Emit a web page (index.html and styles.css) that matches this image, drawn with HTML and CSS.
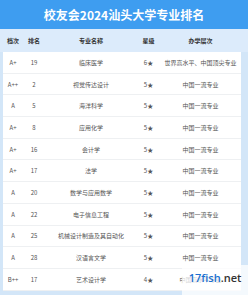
FILE: index.html
```html
<!DOCTYPE html>
<html>

<head>
    <title>校友会2024汕头大学专业排名</title>
    <link rel="stylesheet" href="styles.css">
</head>

<body>
    <div class="page">
        <h1 class="title">校友会2024汕头大学专业排名</h1>
        <div class="row head">
            <div>档次</div>
            <div>排名</div>
            <div>专业名称</div>
            <div>星级</div>
            <div>办学层次</div>
        </div>
        <div class="body">
            <div class="row"><div>A+</div><div>19</div><div>临床医学</div><div>6★</div><div>世界高水平、中国顶尖专业</div></div>
            <div class="row"><div>A++</div><div>2</div><div>视觉传达设计</div><div>5★</div><div>中国一流专业</div></div>
            <div class="row"><div>A</div><div>5</div><div>海洋科学</div><div>5★</div><div>中国一流专业</div></div>
            <div class="row"><div>A+</div><div>8</div><div>应用化学</div><div>5★</div><div>中国一流专业</div></div>
            <div class="row"><div>A+</div><div>16</div><div>会计学</div><div>5★</div><div>中国一流专业</div></div>
            <div class="row"><div>A+</div><div>17</div><div>法学</div><div>5★</div><div>中国一流专业</div></div>
            <div class="row"><div>A</div><div>20</div><div>数学与应用数学</div><div>5★</div><div>中国一流专业</div></div>
            <div class="row"><div>A</div><div>22</div><div>电子信息工程</div><div>5★</div><div>中国一流专业</div></div>
            <div class="row"><div>A</div><div>25</div><div>机械设计制造及其自动化</div><div>5★</div><div>中国一流专业</div></div>
            <div class="row"><div>A</div><div>28</div><div>汉语言文学</div><div>5★</div><div>中国一流专业</div></div>
            <div class="row"><div>B++</div><div>17</div><div>艺术设计学</div><div>4★</div><div>中国高水平专业</div></div>
        </div>
        <div class="mark"><span class="fish">17fish</span>.net</div>
    </div>
</body>

</html>
```

FILE: styles.css
```css
body {
    margin: 0;
    font-family: "Noto Sans CJK SC", "Noto Sans", sans-serif;
}

.page {
    position: relative;
    width: 248px;
    height: 295px;
    overflow: hidden;
    background-color: #d3e6f8;
}

.title {
    margin: 0;
    height: 29px;
    line-height: 29px;
    background-color: #3e9df0;
    color: #fff;
    font-size: 12px;
    font-weight: bold;
    text-align: center;
}

.row {
    display: grid;
    grid-template-columns: 20px 22px 92px 23px 81px;
    align-items: center;
    text-align: center;
    font-size: 6px;
    color: #555;
}

.head {
    height: 23px;
    padding-left: 3px;
    background-color: #dcebfb;
    color: #333;
    font-weight: bold;
}

.body {
    margin: 0 7px 0 3px;
    background-color: #fff;
}

.body .row {
    height: 21.7px;
    box-sizing: border-box;
    border-bottom: 1px solid #eef0f2;
}

.mark {
    position: absolute;
    right: 0;
    bottom: 0;
    width: 66px;
    height: 30px;
    padding-top: 5px;
    box-sizing: border-box;
    background-color: rgba(255, 255, 255, 0.75);
    font-family: "Open Sans", sans-serif;
    font-size: 11px;
    font-weight: 600;
    color: #333;
    text-align: center;
}

.fish {
    color: #1b6fd0;
}
```
